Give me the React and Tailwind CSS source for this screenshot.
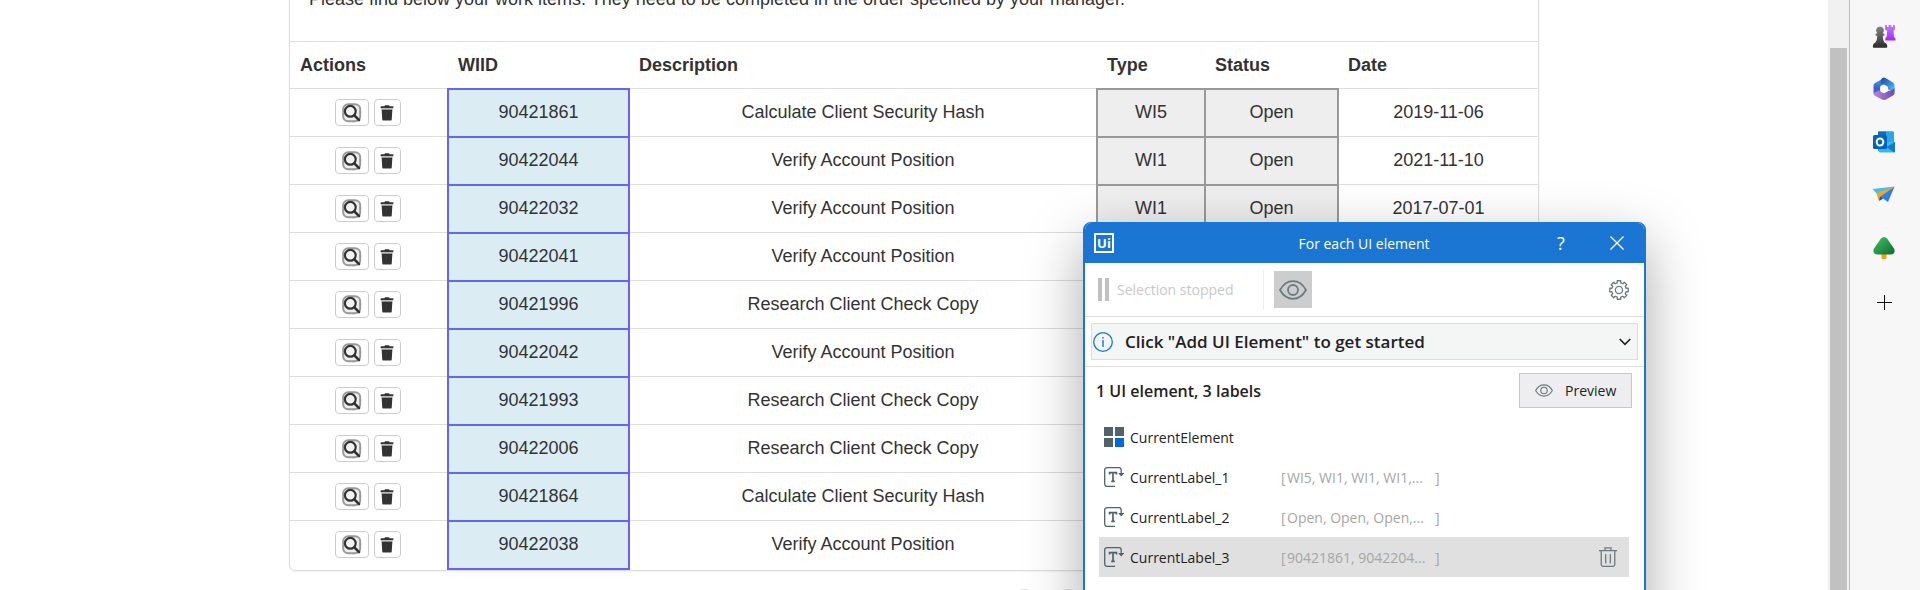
import React from "react";

const ITEMS = [
  ["90421861", "Calculate Client Security Hash", "WI5", "Open", "2019-11-06"],
  ["90422044", "Verify Account Position", "WI1", "Open", "2021-11-10"],
  ["90422032", "Verify Account Position", "WI1", "Open", "2017-07-01"],
  ["90422041", "Verify Account Position"],
  ["90421996", "Research Client Check Copy"],
  ["90422042", "Verify Account Position"],
  ["90421993", "Research Client Check Copy"],
  ["90422006", "Research Client Check Copy"],
  ["90421864", "Calculate Client Security Hash"],
  ["90422038", "Verify Account Position"],
];

const LABELS = [
  ["CurrentLabel_1", "WI5, WI1, WI1, WI1,..."],
  ["CurrentLabel_2", "Open, Open, Open,..."],
  ["CurrentLabel_3", "90421861, 9042204..."],
];

function SearchIcon() {
  return (
    <svg width="20" height="20" viewBox="0 0 20 20" aria-hidden="true">
      <rect x="1.2" y="1.2" width="17" height="17" rx="5" fill="#eee" stroke="#999" strokeWidth="2" />
      <circle cx="8.3" cy="8.3" r="5.4" fill="#f4f4f4" stroke="#333" strokeWidth="2.2" />
      <path d="M12.3 12.3L17 17" stroke="#333" strokeWidth="2.6" strokeLinecap="round" />
    </svg>
  );
}

function BinIcon() {
  return (
    <svg width="14" height="16" viewBox="0 0 14 16" aria-hidden="true">
      <path d="M4.5 1.2Q4.5.3 5.4.3h3.2q.9 0 .9.9H13.3v2H.7v-2z" fill="#333" />
      <path d="M.9 3.2h12.2v1H.9z" fill="#bbb" />
      <path d="M1.6 4.4h10.8l-.7 10.3q0 .8-.9.8H3.2q-.9 0-.9-.8z" fill="#333" />
    </svg>
  );
}

function Eye({ className }) {
  return (
    <svg className={className} viewBox="0 0 28 20" fill="none" stroke="#6c7a83" strokeWidth="1.8" aria-hidden="true">
      <path d="M1 10Q6 1.2 14 1.2T27 10Q22 18.800 14 18.800T1 10z" strokeLinejoin="round" />
      <circle cx="14" cy="10" r="5" />
    </svg>
  );
}

function Gear() {
  const teeth = [0, 1, 2, 3, 4, 5, 6, 7];
  const pts = teeth
    .flatMap((i) =>
      [[-0.24, 7.3], [-0.19, 9.4], [0.19, 9.4], [0.24, 7.3]].map(([d, r]) => {
        const a = (i * Math.PI) / 4 + d;
        return `${(10 + r * Math.sin(a)).toFixed(2)},${(10 - r * Math.cos(a)).toFixed(2)}`;
      })
    )
    .join(" ");
  return (
    <svg width="20" height="20" viewBox="0 0 20 20" fill="none" stroke="#6c7a83" strokeWidth="1.3" aria-hidden="true">
      <polygon points={pts} strokeLinejoin="round" />
      <circle cx="10" cy="10" r="3.6" />
    </svg>
  );
}

function LabelIcon() {
  return (
    <svg width="20" height="20" viewBox="0 0 20 20" fill="none" stroke="#52626c" aria-hidden="true">
      <path d="M11 19.300H3.200Q.7 19.300.7 16.800V3.200Q.7.7 3.200.7H15Q17.200.7 17.200 3V7" strokeWidth="1.300" />
      <path d="M14.200 6h6l-3 3.400z" fill="#52626c" stroke="none" />
      <path d="M5.600 7.500V5.600h6.800v1.900M9 5.600v8.600M7.200 14.300h3.600" strokeWidth="1.700" />
    </svg>
  );
}

function SidebarIcon({ children }) {
  return (
    <svg width="24" height="24" viewBox="0 0 24 24" aria-hidden="true">
      {children}
    </svg>
  );
}

function EdgeSidebar() {
  const btn = "flex h-[53px] w-full items-center justify-center";
  return (
    <aside className="flex w-[71px] shrink-0 flex-col border-l border-[#bdbdbd] bg-[#f7f7f7] pt-[9px] pr-[2px]">
      <button className={btn} aria-label="Games">
        <SidebarIcon>
          <defs>
            <linearGradient id="pawn" x2="0" y2="1"><stop stopColor="#858585" /><stop offset="1" stopColor="#2b2b2b" /></linearGradient>
            <linearGradient id="rook" x2="0" y2="1"><stop stopColor="#c77dff" /><stop offset="1" stopColor="#a428f5" /></linearGradient>
          </defs>
          <path d="M13 1h2v2h1.500V1h3v2H21V1h2v4.500l-1.500 1.300.5 6.200q1.500.6 1.500 2.200v1.300H13.300v-1.500q0-1.500 1.300-2l.6-6.200L13 5.500z" fill="url(#rook)" />
          <path d="M8 2.500a4 4 0 0 1 2.600 7h1.700v2.300h-1.600q0 4.500 1.900 6.600 2.600.8 2.600 3.200v1.500q0 .7-.8.7H1.700q-.8 0-.8-.8v-1.400q0-2.400 2.500-3.200 2-2 1.900-6.600H3.700V9.500h1.700A4 4 0 0 1 8 2.500z" fill="url(#pawn)" />
        </SidebarIcon>
      </button>
      <button className={btn} aria-label="Microsoft 365">
        <SidebarIcon>
          <defs>
            <linearGradient id="ma" x2="0" y2="1"><stop stopColor="#4aa5e8" /><stop offset=".5" stopColor="#3a5fd0" /><stop offset="1" stopColor="#7d62c8" /></linearGradient>
            <linearGradient id="mb" x2="1" y2="1"><stop stopColor="#1f3fb0" /><stop offset="1" stopColor="#4fcaf2" /></linearGradient>
            <linearGradient id="mc" x2="1" y2="0"><stop stopColor="#b98be0" /><stop offset="1" stopColor="#6b4bb0" /></linearGradient>
          </defs>
          <path d="M12 1L3 6Q1.500 7 1.500 8.500v7.500q0 1.700 1.500 2.500l5.500 3V9l7-3.500z" fill="url(#ma)" />
          <path d="M10.500 1Q12 .2 13.500 1L21 5.500q1.500 1 1.500 2.700v7.300L15.500 12V9.500L8.500 6q0-4 2-5z" fill="url(#mb)" />
          <path d="M22.500 11v5q0 1.700-1.500 2.500l-7.500 4.200q-1.500.8-3 0L3 18.500q-1.500-.8-1.500-2.500l7-3v2l4 1 3.500-2q5-1 6.500-3z" fill="url(#mc)" />
          <path d="M12 7.800l3.800 2.100v4.200L12 16.200l-3.800-2.100V9.900z" fill="#fff" />
        </SidebarIcon>
      </button>
      <button className={btn} aria-label="Outlook">
        <SidebarIcon>
          <rect x="6" y="1.500" width="16" height="20" rx="1.500" fill="#1490df" />
          <path d="M14 1.500h6.500q1.500 0 1.500 1.500v9h-8z" fill="#28a8ea" />
          <path d="M6 1.500h8v5H6z" fill="#0f6cbd" />
          <path d="M7 12h8l8 0v9q0 1.500-1.500 1.500H8.500Q7 22.500 7 21z" fill="#35b8f1" />
          <path d="M23 12l-8.500 5 7.500 5.500q1 0 1-1.500z" fill="#1479c9" />
          <rect x="1" y="5" width="14" height="14" rx="1.500" fill="#0364b8" />
          <ellipse cx="8" cy="12" rx="3.300" ry="3.600" fill="none" stroke="#fff" strokeWidth="2" />
        </SidebarIcon>
      </button>
      <button className={btn} aria-label="Drop">
        <SidebarIcon>
          <path d="M.5 6L22.500 3.500 6 12z" fill="#45bdf3" />
          <path d="M22.500 3.500L16 19l-5-3.500-3 2L6.500 13z" fill="#2b7df0" />
          <path d="M22.500 3.500L4.500 10l2 7.500L8 14z" fill="#f0a51c" />
          <path d="M8 14l2.500 1.500L7 18z" fill="#1c459c" />
        </SidebarIcon>
      </button>
      <button className={btn} aria-label="E-tree">
        <SidebarIcon>
          <defs>
            <linearGradient id="tree" x2="1" y2="1"><stop stopColor="#43c468" /><stop offset="1" stopColor="#0d6a2c" /></linearGradient>
          </defs>
          <rect x="9.500" y="17" width="5" height="6" rx="1" fill="#f0a30a" />
          <path d="M9 2.500Q12-.5 15 2.500l7 10q1.500 3-.5 5-1 1-3 1h-13q-2 0-3-1-2-2-.5-5z" fill="url(#tree)" />
        </SidebarIcon>
      </button>
      <button className="flex h-[57px] w-full items-center justify-center" aria-label="Customize">
        <svg width="15" height="15" viewBox="0 0 15 15" aria-hidden="true">
          <path d="M7.500 0v15M0 7.500h15" stroke="#111" strokeWidth="1" />
        </svg>
      </button>
    </aside>
  );
}

function WorkItems() {
  const th = "h-[47px] border-t border-[#ddd] px-[10px] text-left font-bold";
  const td = "h-12 border-t border-[#ddd] px-2 pb-[2px] text-center";
  const tag = "h-12 border-2 border-[#999] bg-[#eee] pb-[2px] text-center";
  return (
    <section className="mx-auto -mt-3 w-full max-w-[1250px] rounded-md border border-[#ddd] font-['Liberation_Sans',Arial,sans-serif] text-[18px] leading-6 text-[#333] shadow-xs">
      <p className="h-[52px] px-[19px] leading-5">
        Please find below your work items. They need to be completed in the order specified by your manager.
      </p>
      <table className="w-full table-fixed border-collapse">
        <colgroup>
          <col className="w-[158px]" />
          <col className="w-[181px]" />
          <col />
          <col className="w-[108px]" />
          <col className="w-[133px]" />
          <col className="w-[200px]" />
        </colgroup>
        <thead>
          <tr>
            {["Actions", "WIID", "Description", "Type", "Status", "Date"].map((h) => (
              <th key={h} className={th}>{h}</th>
            ))}
          </tr>
        </thead>
        <tbody>
          {ITEMS.map(([id, desc, type, status, date]) => (
            <tr key={id}>
              <td className="h-12 border-t border-[#ddd] pr-[2px]">
                <div className="flex items-center justify-center gap-[5px]">
                  <button aria-label="View" className="flex h-[27px] w-[34px] items-center justify-center rounded border border-[#ccc] bg-white"><SearchIcon /></button>
                  <button aria-label="Delete" className="flex h-[27px] w-[27px] items-center justify-center rounded border border-[#ccc] bg-white"><BinIcon /></button>
                </div>
              </td>
              <td className="h-12 border-2 border-[#6464fa] bg-[#dcecf3] pb-[2px] text-center">{id}</td>
              <td className={td}>{desc}</td>
              <td className={tag}>{type}</td>
              <td className={tag}>{status}</td>
              <td className={td}>{date}</td>
            </tr>
          ))}
        </tbody>
      </table>
    </section>
  );
}

function Pager() {
  return (
    <nav className="mx-auto mt-[18px] flex w-full max-w-[1250px] gap-2 pl-[717px]" aria-label="Pages">
      <button aria-label="Previous page" className="h-9 w-9 rounded-full border border-[#ddd]" />
      <button aria-label="Next page" className="h-9 w-9 rounded-full border border-[#ddd]" />
    </nav>
  );
}

function SelectorDialog() {
  return (
    <div role="dialog" aria-label="For each UI element" className="absolute top-[222px] right-[182px] -bottom-10 flex w-[563px] flex-col overflow-hidden rounded-t-lg border-2 border-t border-[#1b76d3] bg-white font-['Open_Sans','Noto_Sans',sans-serif] text-[14px] text-[#222] shadow-[0_20px_56px_rgba(0,0,0,0.34)]">
      <header className="flex h-10 shrink-0 items-center bg-[#1b76d3] pr-[15px] pl-[9px] text-white">
        <span className="flex h-5 w-5 items-center justify-center border-2 border-white text-[13px] leading-4 font-bold">Ui</span>
        <h1 className="flex-1 pl-[81px] text-center text-[14px]">For each UI element</h1>
        <button aria-label="Help" className="w-14 text-[18px]">?</button>
        <button aria-label="Close" className="ml-4 flex h-6 w-6 items-center justify-center">
          <svg width="14" height="14" viewBox="0 0 14 14" stroke="#fff" strokeWidth="1.300"><path d="M.5.5l13 13M13.500.5l-13 13" /></svg>
        </button>
      </header>
      <div className="flex h-[54px] shrink-0 items-center border-b border-[#ddd] pr-[15px] pl-[13px]">
        <button disabled className="flex items-center text-[#c8c8c8]">
          <span className="mr-2 flex h-[23px] w-[11px] justify-between"><i className="w-1 bg-[#c0c0c0]" /><i className="w-1 bg-[#c0c0c0]" /></span>
          Selection stopped
        </button>
        <span className="ml-auto h-10 w-px bg-[#eee]" />
        <button aria-label="Toggle preview" className="mr-[297px] ml-[10px] flex h-[37px] w-[38px] items-center justify-center bg-[#cdcdcd]"><Eye className="h-5 w-7" /></button>
        <button aria-label="Settings"><Gear /></button>
      </div>
      <div className="shrink-0 border-b border-[#ddd] px-[6px] py-[6px]">
        <button className="flex h-[37px] w-full items-center border border-[#ddd] bg-[#f4f6f6] pr-[6px] pl-px text-left text-[17px] font-semibold">
          <svg width="20" height="20" viewBox="0 0 20 20" fill="none" stroke="#1b76d3" aria-hidden="true">
            <circle cx="10" cy="10" r="9.300" strokeWidth="1.300" />
            <path d="M10 8v7M10 5v1.500" strokeWidth="1.400" />
          </svg>
          <span className="ml-3 flex-1">Click "Add UI Element" to get started</span>
          <svg width="12" height="8" viewBox="0 0 12 8" fill="none" stroke="#222" strokeWidth="1.700" aria-hidden="true"><path d="M.7 1L6 6.300 11.300 1" /></svg>
        </button>
      </div>
      <div className="flex shrink-0 items-center pt-[6px] pr-3 pl-[11px]">
        <h2 className="flex-1 text-[16px] font-semibold">1 UI element, 3 labels</h2>
        <button className="flex h-[35px] w-[113px] items-center border border-[#c8c8cc] bg-[#eeeef1] pl-[15px]">
          <Eye className="mr-3 h-[13px] w-[18px]" />
          Preview
        </button>
      </div>
      <ul className="mt-[9px] mr-[15px] ml-[14px]">
        <li className="flex h-10 items-center pl-[5px]">
          <svg width="20" height="20" viewBox="0 0 20 20" aria-hidden="true">
            <path d="M0 0h9v9H0zM11 0h9v9h-9zM0 11h9v9H0z" fill="#52626c" />
            <path d="M11 11h9v9h-9z" fill="#0067df" />
          </svg>
          <span className="ml-[6px]">CurrentElement</span>
        </li>
        {LABELS.map(([name, values], i) => (
          <li key={name} className={i === 2 ? "flex h-10 items-center bg-[#e0e0e0] pl-[5px]" : "flex h-10 items-center pl-[5px]"}>
            <LabelIcon />
            <span className="ml-[6px] w-[151px]">{name}</span>
            <span className="w-[6px] text-[#a6a6a6]">[</span>
            <span className="w-[148px] whitespace-nowrap text-[#a6a6a6]">{values}</span>
            <span className="text-[#a6a6a6]">]</span>
            {i === 2 && (
              <button aria-label="Delete label" className="mr-3 ml-auto">
                <svg width="18" height="20" viewBox="0 0 18 20" fill="none" stroke="#6c7a83" strokeWidth="1.300" aria-hidden="true">
                  <path d="M0 3.700h18M6 3.500V.8h6v2.700M2.200 4v13.500q0 1.800 1.800 1.800h10q1.800 0 1.800-1.800V4M6.700 7v9.500M11.300 7v9.500" />
                </svg>
              </button>
            )}
          </li>
        ))}
      </ul>
    </div>
  );
}

export default function App() {
  return (
    <div className="flex h-screen overflow-hidden bg-white">
      <main className="relative min-w-0 flex-1 overflow-hidden">
        <WorkItems />
        <Pager />
        <SelectorDialog />
      </main>
      <div className="flex w-[21px] shrink-0 flex-col bg-[#f1f1f1] px-[2px] pt-12" aria-hidden="true">
        <div className="flex-1 bg-[#c1c1c1]" />
      </div>
      <EdgeSidebar />
    </div>
  );
}
